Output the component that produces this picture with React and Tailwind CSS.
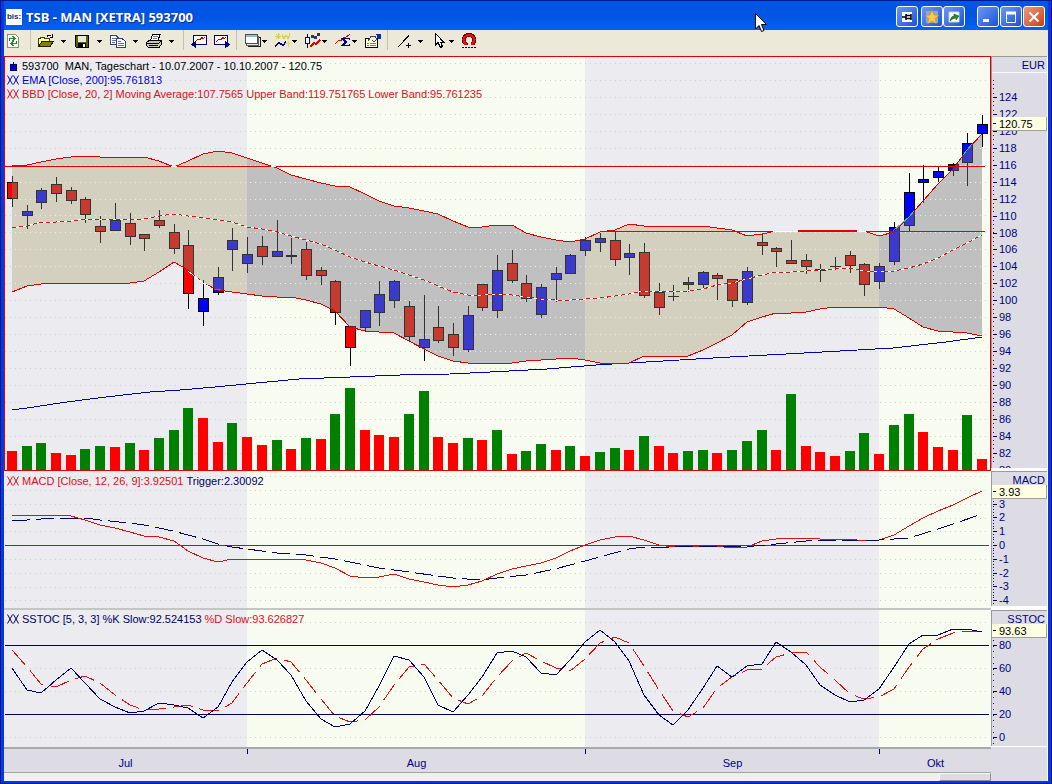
import React from 'react';

// x position of the n-th trading day
const dayX = (i) => Math.round(12 + i * 14.697);

// [high, body top, body bottom, low, direction]
const candles = [
  [176, 182, 198, 206, 'r'], [205, 211, 215, 228, 'b'], [188, 190, 202, 208, 'b'], [177, 184, 193, 201, 'r'],
  [187, 190, 200, 203, 'r'], [197, 199, 214, 222, 'r'], [216, 226, 231, 242, 'r'], [203, 220, 230, 230, 'b'],
  [213, 223, 236, 244, 'r'], [234, 234, 238, 250, 'r'], [210, 220, 225, 227, 'r'], [224, 232, 248, 253, 'r'],
  [230, 245, 293, 308, 'r'], [280, 298, 311, 325, 'b'], [267, 277, 292, 294, 'b'], [228, 240, 249, 270, 'b'],
  [237, 254, 263, 272, 'b'], [236, 246, 256, 264, 'r'], [220, 251, 256, 256, 'b'], [238, 255, 256, 263, 'b'],
  [242, 249, 275, 279, 'r'], [267, 270, 275, 284, 'r'], [280, 281, 312, 324, 'r'], [326, 326, 347, 365, 'r'],
  [310, 310, 327, 331, 'b'], [281, 294, 312, 325, 'b'], [280, 281, 300, 307, 'b'], [301, 306, 336, 340, 'r'],
  [295, 339, 347, 360, 'b'], [306, 327, 340, 342, 'r'], [323, 334, 347, 355, 'r'], [306, 315, 349, 351, 'b'],
  [284, 284, 307, 310, 'r'], [255, 270, 310, 317, 'b'], [250, 263, 280, 282, 'r'], [275, 283, 298, 301, 'r'],
  [284, 287, 314, 317, 'b'], [267, 273, 279, 301, 'b'], [254, 255, 273, 273, 'b'], [237, 240, 250, 255, 'b'],
  [233, 238, 242, 251, 'b'], [232, 240, 259, 265, 'r'], [244, 253, 257, 274, 'b'], [243, 252, 295, 297, 'r'],
  [283, 292, 307, 314, 'r'], [285, 296, 296, 300, 'b'], [277, 282, 284, 291, 'b'], [271, 272, 284, 287, 'b'],
  [273, 275, 278, 299, 'r'], [279, 279, 300, 306, 'r'], [267, 271, 302, 304, 'b'], [234, 242, 245, 254, 'r'],
  [247, 248, 251, 266, 'r'], [240, 260, 263, 263, 'r'], [254, 260, 266, 273, 'r'], [264, 269, 270, 281, 'b'],
  [257, 266, 266, 269, 'b'], [251, 255, 265, 272, 'r'], [263, 264, 284, 295, 'r'], [263, 266, 281, 288, 'b'],
  [222, 227, 261, 264, 'b'], [173, 192, 225, 230, 'b'], [165, 179, 182, 202, 'b'], [167, 171, 177, 181, 'b'],
  [163, 164, 170, 175, 'b'], [133, 143, 162, 185, 'b'], [115, 124, 133, 146, 'b'],
];

const upperBand = [
  166, 165, 162, 159, 157, 156, 157, 157, 157, 157, 161, 167, 161, 154, 151, 153, 158, 163, 168, 175, 179, 183, 186,
  187, 194, 201, 206, 208, 211, 214, 221, 227, 227, 225, 225, 233, 237, 240, 242, 239, 232, 230, 224, 226, 226, 226,
  226, 226, 228, 230, 236, 234, 231, 231, 231, 231, 231, 231, 231, 236, 232, 217, 201, 184, 169, 150, 134,
];

const lowerBand = [
  292, 286, 284, 283, 283, 283, 283, 283, 283, 281, 272, 262, 270, 283, 290, 292, 294, 296, 297, 297, 300, 304, 311,
  327, 331, 332, 333, 341, 349, 356, 361, 363, 363, 363, 363, 361, 360, 359, 358, 360, 363, 364, 363, 356, 356, 356,
  356, 350, 343, 335, 322, 317, 313, 313, 312, 309, 307, 307, 308, 307, 309, 318, 327, 331, 332, 333, 336,
];

const movingAverage = [
  228, 226, 222, 222, 221, 219, 220, 219, 219, 219, 216, 214, 216, 218, 220, 222, 227, 229, 232, 236, 240, 244, 250,
  257, 262, 266, 270, 275, 280, 286, 292, 295, 295, 294, 295, 297, 299, 300, 300, 299, 298, 296, 294, 291, 292, 291,
  291, 289, 285, 283, 279, 275, 272, 272, 271, 270, 269, 268, 271, 271, 271, 268, 264, 258, 250, 243, 235,
];

const volumes = [
  [451, 'r'], [446, 'g'], [443, 'g'], [453, 'r'], [455, 'r'], [449, 'g'], [446, 'g'], [447, 'r'], [443, 'g'],
  [450, 'r'], [438, 'g'], [430, 'g'], [408, 'g'], [418, 'r'], [442, 'r'], [423, 'g'], [437, 'r'], [445, 'r'],
  [440, 'g'], [449, 'r'], [438, 'g'], [439, 'r'], [414, 'g'], [388, 'g'], [430, 'r'], [435, 'r'], [437, 'r'],
  [414, 'g'], [391, 'g'], [437, 'r'], [443, 'r'], [438, 'g'], [440, 'r'], [430, 'g'], [454, 'r'], [451, 'g'],
  [444, 'g'], [450, 'r'], [446, 'g'], [456, 'r'], [452, 'g'], [448, 'g'], [450, 'r'], [436, 'g'], [446, 'r'],
  [453, 'r'], [451, 'g'], [450, 'g'], [453, 'r'], [450, 'g'], [441, 'g'], [430, 'g'], [450, 'r'], [394, 'g'],
  [446, 'r'], [452, 'r'], [456, 'r'], [451, 'g'], [433, 'g'], [454, 'r'], [425, 'g'], [414, 'g'], [432, 'r'],
  [447, 'r'], [450, 'r'], [415, 'g'], [459, 'r'],
];

const macd = [
  515, 516, 515, 515, 516, 520, 525, 528, 532, 536, 537, 541, 551, 558, 562, 559, 559, 559, 559, 559, 560, 563, 568,
  576, 578, 577, 574, 579, 582, 585, 587, 585, 581, 574, 569, 566, 563, 558, 551, 545, 540, 537, 536, 540, 545, 547,
  546, 546, 546, 548, 547, 541, 539, 538, 538, 539, 539, 539, 541, 540, 535, 526, 518, 511, 505, 498, 491,
];

const slowK = [
  668, 690, 693, 680, 668, 683, 699, 707, 713, 711, 703, 705, 708, 718, 707, 682, 662, 650, 660, 675, 701, 719, 727,
  724, 711, 686, 656, 660, 677, 705, 712, 695, 677, 653, 651, 657, 673, 675, 660, 642, 630, 642, 661, 695, 715, 725,
  710, 688, 666, 677, 666, 664, 642, 652, 665, 685, 695, 702, 700, 689, 667, 644, 635, 635, 629, 629, 632,
];

const slowD = [
  650, 667, 684, 687, 680, 676, 683, 695, 705, 710, 709, 707, 705, 710, 711, 703, 683, 664, 658, 662, 680, 699, 716,
  722, 720, 707, 685, 667, 664, 680, 698, 704, 696, 677, 661, 653, 661, 668, 671, 659, 643, 637, 643, 666, 690, 711,
  717, 708, 688, 677, 670, 669, 657, 653, 652, 667, 680, 694, 699, 697, 689, 667, 649, 639, 633, 631, 631,
];

const emaLine =
  '12,410 27,408 60,403 90,399 123,395 150,392 180,390 215,387 246,384 299,379 350,377 400,375 450,374 490,372 547,369 596,365 646,362 730,357 786,354 840,351 893,348 946,342 982,337';

const triggerLine =
  '12,521 27,520 41,519 56,518 85,518 100,520 129,523 144,525 159,528 173,531 188,535 203,539 218,544 232,547 247,549 277,553 306,555 320,557 335,559 350,562 379,568 409,572 438,576 453,578 467,579 482,580 497,578 526,575 555,569 585,561 614,553 629,549 644,547 673,547 706,546 754,546 776,544 806,541 859,540 879,540 909,538 938,529 953,524 982,514';

const points = (ys) => ys.map((y, i) => `${dayX(i)},${y}`).join(' ');

const bandShape = `${points(upperBand)} ${lowerBand
  .map((y, i) => `${dayX(i)},${y}`)
  .reverse()
  .join(' ')}`;

const months = [
  { name: 'Jul', x: 4, w: 243, fill: '#ececf0', band: '#d3d0bf' },
  { name: 'Aug', x: 247, w: 338, fill: '#f8fcf0', band: '#c0c0c0' },
  { name: 'Sep', x: 585, w: 294, fill: '#ececf0', band: '#d3d0bf' },
  { name: 'Okt', x: 879, w: 112, fill: '#f8fcf0', band: '#c0c0c0' },
];

const priceGrid = Array.from({ length: 24 }, (_, i) => Math.round(63 + i * 16.94));
const macdGrid = [476, 490, 504, 518, 531, 559, 573, 587, 600];
const stochGrid = [622, 668, 691, 737];

function Backdrop({ y, height }) {
  return months.map((m) => <rect key={m.name} x={m.x} y={y} width={m.w} height={height} fill={m.fill} />);
}

function Grid({ rows, color }) {
  return rows.map((y) => (
    <line key={y} x1="5" x2="990" y1={y + 0.5} y2={y + 0.5} stroke={color} strokeDasharray="1 4" />
  ));
}

function Level({ x = 5, y, to, color }) {
  return <rect x={x} y={y} width={to - x} height="1" fill={color} />;
}

function Candles({ up, down, line }) {
  return candles.map(([high, top, bottom, low, dir], i) => {
    const x = dayX(i);
    return (
      <g key={i} shapeRendering="crispEdges">
        <rect x={x} y={high} width="1" height={low - high + 1} fill={line} />
        <rect x={x - 5} y={top} width="11" height={bottom - top + 1} fill={line} />
        {bottom - top > 1 && (
          <rect x={x - 4} y={top + 1} width="9" height={bottom - top - 1} fill={dir === 'b' ? up : down} />
        )}
      </g>
    );
  });
}

function PriceChart() {
  return (
    <svg viewBox="4 56 987 415" preserveAspectRatio="none" className="block h-[415px] w-full" shapeRendering="crispEdges">
      <defs>
        <clipPath id="band">
          <polygon points={bandShape} />
        </clipPath>
      </defs>
      <Backdrop y={56} height={415} />
      <Grid rows={priceGrid} color="#cfcfcf" />
      <Candles up="#0000ff" down="#ff0000" line="#000000" />
      <g clipPath="url(#band)">
        {months.map((m) => (
          <rect key={m.name} x={m.x} y="56" width={m.w} height="415" fill={m.band} />
        ))}
        <Grid rows={priceGrid} color="#ececec" />
        <Candles up="#3a3acc" down="#c63a30" line="#333333" />
      </g>
      <polygon points="604,231 614,230 629,224 644,226 702,226 718,228 733,231" fill="#e8cabd" />
      {volumes.map(([top, dir], i) => (
        <rect key={i} x={dayX(i) - 5} y={top} width="10" height={470 - top} fill={dir === 'g' ? '#008000' : '#ff0000'} />
      ))}
      <g fill="none">
        <polyline points={emaLine} stroke="#0000b0" />
        <polyline points={points(lowerBand)} stroke="#e00000" />
        <polyline points={points(upperBand)} stroke="#e00000" />
        <polyline points={points(movingAverage)} stroke="#ffffff" />
        <polyline points={points(movingAverage)} stroke="#d01818" strokeDasharray="4 3" />
        <path d="M188 271L203 283L211 288" stroke="#ffffff" />
        <path d="M214 289H221" stroke="#20a0a0" />
        <path d="M893 231L909 217L914 211M963 155L972 144" stroke="#40c0b0" />
      </g>
      <Level y={166} to={985} color="#e00000" />
      <Level x={604} y={231} to={985} color="#e00000" />
      <rect x="798" y="230" width="59" height="2" fill="#e00000" />
      <Level x={773} y={231} to={798} color="#ffffff" />
      <Level x={857} y={231} to={866} color="#ffffff" />
      <Level x={171} y={166} to={177} color="#ffffff" />
      <Level x={271} y={166} to={276} color="#ffffff" />
      <rect x="4" y="56" width="987" height="1" fill="#e00000" />
      <rect x="4" y="470" width="987" height="1" fill="#e00000" />
      <rect x="4" y="56" width="1" height="415" fill="#e00000" />
      <rect x="990" y="56" width="1" height="415" fill="#e00000" />
    </svg>
  );
}

function MacdChart() {
  return (
    <svg viewBox="4 471 987 139" preserveAspectRatio="none" className="block h-[139px] w-full" shapeRendering="crispEdges">
      <Backdrop y={471} height={137} />
      <Grid rows={macdGrid} color="#cfcfcf" />
      <Level y={545} to={989} color="#e00000" />
      <g fill="none">
        <polyline points={points(macd)} stroke="#e01010" />
        <polyline points={triggerLine} stroke="#000070" strokeDasharray="18 6" />
      </g>
      <rect x="4" y="608" width="987" height="2" fill="#c4c6c4" />
    </svg>
  );
}

function StochasticChart() {
  return (
    <svg viewBox="4 610 987 137" preserveAspectRatio="none" className="block h-[137px] w-full" shapeRendering="crispEdges">
      <Backdrop y={610} height={137} />
      <Grid rows={stochGrid} color="#cfcfcf" />
      <Level y={645} to={989} color="#000060" />
      <Level y={714} to={989} color="#000060" />
      <g fill="none">
        <polyline points={points(slowD)} stroke="#e01010" strokeDasharray="20 7" />
        <polyline points={points(slowK)} stroke="#000070" />
      </g>
    </svg>
  );
}

function IndicatorMark() {
  return (
    <svg viewBox="0 0 12 10" className="h-2.5 w-3 shrink-0" fill="none" stroke="currentColor">
      <path d="M0.500 0.500L5.500 9.500M5.500 0.500L0.500 9.500M6.500 0.500L11.500 9.500M11.500 0.500L6.500 9.500" />
    </svg>
  );
}

function Legend({ className, children }) {
  return <div className={`flex h-3.5 items-center gap-[3px] whitespace-pre ${className}`}>{children}</div>;
}

function Axis({ title, value, tagClass, origin, height, heightClass, labels, minor }) {
  return (
    <div className={`relative border-t border-l border-[#9a9a9a] bg-[#dddce4] ${heightClass}`}>
      <div className="h-4 border-b border-[#f8f8f8] pr-[2px] text-right leading-4 text-[#000080]">{title}</div>
      <svg
        viewBox={`992 ${origin} 56 ${height}`}
        className="block w-14 font-['Liberation_Sans',Arial,sans-serif] text-[11px]"
        shapeRendering="crispEdges"
      >
        {minor.map((y) => (
          <rect key={y} x="993" y={y} width="1" height="1" fill="#000060" />
        ))}
        {labels.map(([text, y]) => (
          <g key={text}>
            <rect x="993" y={y} width="4" height="1" fill="#000060" />
            <text x={999} y={y + 4} fill="#000080">
              {text}
            </text>
          </g>
        ))}
      </svg>
      <div
        className={`absolute right-0 left-0 flex h-[14px] items-center gap-[3px] border-r border-b border-[#a0a0a0] bg-[#ffffe1] text-black ${tagClass}`}
      >
        <span className="ml-px h-px w-[3px] bg-black" />
        {value}
      </div>
    </div>
  );
}

const range = (from, to, step) => {
  const out = [];
  for (let y = from; y <= to; y += step) out.push(Math.round(y));
  return out;
};

const priceLabels = Array.from({ length: 23 }, (_, i) => [String(124 - i * 2), Math.round(97 + i * 16.94)]);
const macdLabels = [3, 2, 1, 0, -1, -2, -3, -4].map((v) => [String(v), Math.round(545 - v * 13.8)]);
const stochLabels = [[80, 645], [60, 668], [40, 691], [20, 714], [0, 737]].map(([v, y]) => [String(v), y]);

function Icon({ children }) {
  return (
    <svg viewBox="0 0 16 16" className="h-4 w-4 shrink-0" fill="none" shapeRendering="crispEdges">
      {children}
    </svg>
  );
}

function Arrow() {
  return (
    <svg viewBox="0 0 5 3" className="h-[3px] w-[5px] shrink-0" fill="#000" shapeRendering="crispEdges">
      <path d="M0 0H5V1H4V2H3V3H2V2H1V1H0Z" />
    </svg>
  );
}

function Tool({ label, icon, className }) {
  return (
    <button type="button" aria-label={label} className={`flex h-[22px] items-center ${className}`}>
      <Icon>{icon}</Icon>
    </button>
  );
}

function MenuTool({ label, icon, className }) {
  return (
    <button type="button" aria-label={label} className={`flex h-[22px] items-center ${className}`}>
      <Icon>{icon}</Icon>
      <Arrow />
    </button>
  );
}

function Separator({ className }) {
  return <span className={`h-5 w-px bg-[#c5c2b4] ${className}`} />;
}

const icons = {
  refresh: (
    <>
      <path d="M2.500 1.500H10.500L13.500 4.500V14.500H2.500Z" fill="#fff" stroke="#909070" />
      <path d="M4.500 8V5.500H9M7.500 3L10 5.500L7.500 8M11.500 8V10.500H7M8.500 8L6 10.500L8.500 13" stroke="#10901c" />
    </>
  ),
  open: (
    <>
      <path d="M0.500 13.500V5.500H2L3 4.500H6L7 5.500H11.500V8" fill="#ffff90" stroke="#403c00" />
      <path d="M0.500 13.500L4 8.500H15.500L12 13.500Z" fill="#808000" stroke="#202000" />
      <path d="M9 3.500Q11 0.500 13.500 3.500M14.500 1V4.500H11.500" stroke="#000" />
    </>
  ),
  save: (
    <>
      <path d="M1.500 2.500H14.500V14.500H2.500L1.500 13.500Z" fill="#606000" stroke="#000" />
      <rect x="4" y="3" width="8" height="6" fill="#e8e8e0" />
      <rect x="4" y="10" width="8" height="4" fill="#000" />
      <rect x="9" y="11" width="2" height="3" fill="#fff" />
    </>
  ),
  copy: (
    <>
      <path d="M0.500 2.500H6L8.500 5V11.500H0.500Z" fill="#fff" stroke="#404060" />
      <path d="M2 5.500H6M2 7.500H6M2 9.500H5" stroke="#6070a0" />
      <path d="M6.500 5.500H12L15.500 8.500V14.500H6.500Z" fill="#fff" stroke="#304090" />
      <path d="M8 8.500H11M8 10.500H14M8 12.500H14" stroke="#6070a0" />
    </>
  ),
  print: (
    <>
      <path d="M4.500 7.500L6.500 1.500H14L12 7.500" fill="#fff" stroke="#000" />
      <path d="M7 3.500H12M6.500 5.500H11" stroke="#808080" />
      <path d="M0.500 9.500L3 7.500H15.500V11L13 14.500H2.500L0.500 12.500Z" fill="#c8c8c0" stroke="#000" />
      <path d="M1 10.500H12.500L15 8M3 12.500H12" stroke="#000" />
      <rect x="8" y="11" width="3" height="1" fill="#e0e000" />
    </>
  ),
  chartBack: (
    <>
      <rect x="2.500" y="2.500" width="13" height="9" fill="#fff" stroke="#000080" />
      <path d="M4 9L7 6L9 7L11 4L12 6L14 4" stroke="#e00000" />
      <path d="M0 11.500L5 7.500V15.500Z" fill="#000080" />
    </>
  ),
  chartForward: (
    <>
      <rect x="0.500" y="2.500" width="13" height="9" fill="#fff" stroke="#000080" />
      <path d="M2 9L5 6L7 7L9 4L10 6L12 4" stroke="#e00000" />
      <path d="M16 11.500L11 7.500V15.500Z" fill="#000080" />
    </>
  ),
  windows: (
    <>
      <rect x="3.500" y="4.500" width="12" height="9" rx="1" fill="#e8e8e8" stroke="#202020" />
      <rect x="1.500" y="3.500" width="12" height="9" rx="1" fill="#e8e8e8" stroke="#606060" />
      <rect x="0.500" y="1.500" width="12" height="9" rx="1" fill="#fff" stroke="#505050" />
      <rect x="1" y="2" width="11" height="2" fill="#90b8e8" />
    </>
  ),
  newChart: (
    <>
      <path d="M1 1L5 5M3.500 0V6M0 3.500H6M1 6L5 1M7 1L9 6L11 2L13 6L15 0M9 3H15" stroke="#d8d050" />
      <path d="M13.500 8V14M10 10.500H16" stroke="#e0d860" />
      <path d="M0 13.500L4 9.500L8 12.500L11 8.500" stroke="#000080" strokeWidth="1.500" />
    </>
  ),
  candle: (
    <>
      <path d="M2.500 0.500V14.500" stroke="#000080" />
      <rect x="0.500" y="4.500" width="4" height="6" fill="#fff" stroke="#000080" />
      <path d="M5 14L9 10L11 11L15 7" stroke="#e00000" strokeWidth="1.500" />
      <rect x="6" y="2" width="3" height="3" fill="#303070" />
      <rect x="9" y="3" width="3" height="3" fill="#303070" />
      <rect x="12" y="0" width="3" height="3" fill="#303070" />
    </>
  ),
  sigma: (
    <>
      <path d="M0 11L4 7L6 8L9 4L10 5L15 1" stroke="#e00000" />
      <path d="M14.500 7V5.500H7.500L11 9L7.500 12.500H14.500V11" stroke="#000080" strokeWidth="1.500" />
    </>
  ),
  properties: (
    <>
      <rect x="0.500" y="5.500" width="12" height="9" fill="#ffffd8" stroke="#000" />
      <path d="M2 10.500H4M5 10.500H11M2 12.500H4M5 12.500H11" stroke="#808060" />
      <path d="M3 8L6 3.500H10L12 6L9 9L7 7" fill="#f0f0e0" stroke="#404040" />
      <path d="M11 1H16V6H13Z" fill="#0030b0" />
    </>
  ),
  line: <path d="M1.500 14.500L13 2.500M12.500 10V15M10 12.500H15" stroke="#000" />,
  pointer: <path d="M3.500 0.500V12L6 9.500L8.500 14.500L10.500 13.500L8.500 9H11.500Z" fill="#fff" stroke="#000" />,
  magnet: (
    <>
      <path d="M4.500 12V10.500Q2 8 3 5Q5 1.500 8 1.500Q11 1.500 13 5Q14 8 11.500 10.500V12" stroke="#600000" strokeWidth="4" />
      <path d="M4.500 12V10.500Q2 8 3 5Q5 2 8 2Q11 2 13 5Q14 8 11.500 10.500V12" stroke="#e01010" strokeWidth="2.500" />
      <path d="M1 14.500H15" stroke="#000" strokeDasharray="2 1" />
    </>
  ),
};

function Toolbar() {
  return (
    <div className="flex h-[26px] items-start bg-[#ece9d8]">
      <Tool label="Refresh" icon={icons.refresh} className="ml-[1px] w-[25px]" />
      <Separator className="mr-[7px]" />
      <MenuTool label="Open" icon={icons.open} className="w-9 gap-[7px]" />
      <MenuTool label="Save" icon={icons.save} className="w-9 gap-[7px]" />
      <MenuTool label="Copy" icon={icons.copy} className="w-9 gap-[7px]" />
      <MenuTool label="Print" icon={icons.print} className="w-9 gap-[7px]" />
      <Separator className="mr-[7px] ml-px" />
      <Tool label="Scroll back" icon={icons.chartBack} className="w-[23px]" />
      <Tool label="Scroll forward" icon={icons.chartForward} className="w-[22px]" />
      <Separator className="mr-2" />
      <MenuTool label="Windows" icon={icons.windows} className="w-[30px] gap-px" />
      <MenuTool label="New chart" icon={icons.newChart} className="w-[30px] gap-px" />
      <MenuTool label="Chart type" icon={icons.candle} className="w-[30px] gap-px" />
      <MenuTool label="Indicators" icon={icons.sigma} className="w-[30px] gap-px" />
      <Tool label="Properties" icon={icons.properties} className="w-[22px]" />
      <Separator className="mr-2" />
      <MenuTool label="Trend line" icon={icons.line} className="w-9 gap-[6px]" />
      <MenuTool label="Pointer" icon={icons.pointer} className="w-[29px] gap-px" />
      <Tool label="Magnet" icon={icons.magnet} className="w-5" />
    </div>
  );
}

function TitleButton({ label, danger, children }) {
  return (
    <button
      type="button"
      aria-label={label}
      className={`flex h-[21px] w-[22px] items-center justify-center rounded-[3px] border border-white bg-linear-to-br ${
        danger ? 'from-[#f09878] to-[#c83c10]' : 'from-[#6c98f4] to-[#1c50d8]'
      }`}
    >
      <svg viewBox="0 0 14 14" className="h-3.5 w-3.5" fill="none">
        {children}
      </svg>
    </button>
  );
}

function TitleBar() {
  return (
    <header className="flex h-[30px] items-center bg-linear-to-b from-[#0058e6] via-[#0054e0] to-[#0062f4] pt-[3px] pr-[3px] pl-[2px]">
      <span className="flex h-4 w-4 items-center justify-center bg-white text-[8px] font-bold text-[#103060]">bis:</span>
      <h1 className="ml-1 flex-1 font-['Noto_Sans','Open_Sans',sans-serif] text-[13px] font-bold text-white [text-shadow:1px_1px_#0c2c90]">
        TSB - MAN [XETRA] 593700
      </h1>
      <div className="flex items-center">
        <TitleButton label="Pin">
          <path d="M2 2H12V12H2Z" fill="#fff" />
          <path d="M2 7H6M6 4V10M6 5.500H11V8.500H6M11 4V10" stroke="#000" strokeWidth="1.500" />
        </TitleButton>
        <span className="w-[3px]" />
        <TitleButton label="Favourites">
          <path d="M1 1H13V13H1Z" fill="#8fa8c8" />
          <path d="M7 0L9 5L14 5.500L10 8.500L11.500 14L7 11L2.500 14L4 8.500L0 5.500L5 5Z" fill="#ffcc40" stroke="#d08010" strokeWidth="0.500" />
        </TitleButton>
        <TitleButton label="Link">
          <path d="M2 2H12V12H2Z" fill="#fff" stroke="#c0d8c0" />
          <path d="M3 11Q4 6 7 6V4L12 6L9 10V8Q6 8 3 11Z" fill="#209020" stroke="#104010" strokeWidth="0.500" />
        </TitleButton>
        <div className="ml-3 flex gap-px">
          <TitleButton label="Minimize">
            <path d="M2 10.500H8" stroke="#fff" strokeWidth="3" />
          </TitleButton>
          <TitleButton label="Maximize">
            <path d="M2 3H12" stroke="#fff" strokeWidth="3" />
            <path d="M2.500 3V12.500H11.500V3" stroke="#fff" />
          </TitleButton>
          <TitleButton label="Close" danger>
            <path d="M2.500 2.500L11.500 11.500M11.500 2.500L2.500 11.500" stroke="#fff" strokeWidth="2" />
          </TitleButton>
        </div>
      </div>
    </header>
  );
}

function TimeAxis() {
  return (
    <div className="grid h-[26px] grid-cols-[243fr_338fr_294fr_112fr] border-t-2 border-b border-t-[#a8aaa8] border-b-[#a0a898] bg-[#dddce4] text-[#000080]">
      {months.map((m, i) => (
        <div key={m.name} className="flex">
          {i > 0 && <span className="h-[5px] w-px bg-[#000060]" />}
          <span className="flex flex-1 items-center justify-center pt-1">{m.name}</span>
        </div>
      ))}
    </div>
  );
}

export default function App() {
  return (
    <div className="relative border-x-4 border-b-[3px] border-[#0838dc] bg-[#dddce4] font-['Liberation_Sans',Arial,sans-serif] text-[11px] leading-[14px] outline-1 -outline-offset-1 outline-[#001890]">
      <TitleBar />
      <Toolbar />
      <main className="flex">
        <div className="min-w-0 flex-1">
          <section className="relative">
            <PriceChart />
            <div className="absolute top-[3px] left-[3px]">
              <Legend className="text-black">
                <svg viewBox="0 0 12 11" className="h-[11px] w-3" shapeRendering="crispEdges">
                  <path d="M6 1V10" stroke="#000" />
                  <rect x="3" y="3" width="6" height="6" fill="#0000c0" stroke="#000060" />
                </svg>
                593700  MAN, Tageschart - 10.07.2007 - 10.10.2007 - 120.75
              </Legend>
              <Legend className="text-[#0000d0]">
                <IndicatorMark />
                EMA [Close, 200]:95.761813
              </Legend>
              <Legend className="text-[#d81020]">
                <IndicatorMark />
                BBD [Close, 20, 2] Moving Average:107.7565 Upper Band:119.751765 Lower Band:95.761235
              </Legend>
            </div>
          </section>
          <section className="relative">
            <MacdChart />
            <Legend className="absolute top-[3px] left-[3px] text-[#d81020]">
              <IndicatorMark />
              MACD [Close, 12, 26, 9]:3.92501
              <span className="text-[#000060]">Trigger:2.30092</span>
            </Legend>
          </section>
          <section className="relative">
            <StochasticChart />
            <Legend className="absolute top-[2px] left-[3px] text-[#000060]">
              <IndicatorMark />
              SSTOC [5, 3, 3] %K Slow:92.524153
              <span className="text-[#d81020]">%D Slow:93.626827</span>
            </Legend>
          </section>
          <TimeAxis />
          <div className="flex h-2 justify-end bg-[#f0efee]">
            <div className="h-full w-[52px] border-t border-r border-b border-l border-[#f8f8f8] border-r-[#909090] border-b-[#909090] bg-[#dddce4]" />
          </div>
        </div>
        <aside className="w-[57px] border-r border-white">
          <Axis
            title="EUR"
            value="120.75"
            tagClass="top-[60px]"
            origin={73}
            height={395}
            heightClass="h-[412px] overflow-hidden"
            labels={priceLabels}
            minor={range(80, 465, 4.235)}
          />
          <div className="h-[3px] bg-white" />
          <Axis
            title="MACD"
            value="3.93"
            tagClass="top-[13px]"
            origin={488}
            height={118}
            heightClass="h-[135px] overflow-hidden"
            labels={macdLabels}
            minor={range(498, 604, 2.76)}
          />
          <div className="h-[4px] bg-white" />
          <Axis
            title="SSTOC"
            value="93.63"
            tagClass="top-[13px]"
            origin={627}
            height={119}
            heightClass="h-[136px] overflow-hidden"
            labels={stochLabels}
            minor={range(634, 744, 5.75)}
          />
          <div className="h-px bg-white" />
        </aside>
      </main>
      <svg viewBox="0 0 12 20" className="absolute top-[13px] left-[751px] h-5 w-3" fill="#fff" stroke="#000">
        <path d="M0.500 0.500V16L4 12.500L6.500 18.500L9 17.500L6.500 11.500H11.500Z" />
      </svg>
    </div>
  );
}
